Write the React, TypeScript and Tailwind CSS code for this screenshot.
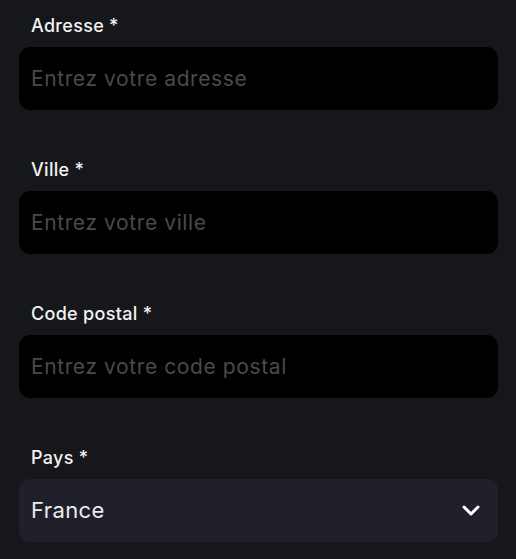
import { useState } from 'react';

const fields = [
    { label: "Adresse", placeholder: "Entrez votre adresse" },
    { label: "Ville", placeholder: "Entrez votre ville" },
    { label: "Code postal", placeholder: "Entrez votre code postal" },
];

const AddressForm = () => {
    const [values, setValues] = useState<Record<string, string>>({});
    const [country, setCountry] = useState("France");

    return (
        <div
            className="min-h-screen w-full bg-[#16171b] pl-[19px] pr-[18px] pt-[12px] font-['Inter',sans-serif]"
        >
            <div className="flex flex-col gap-y-[46px]">
                {fields.map((field) => (
                    <div key={field.label} className="flex flex-col gap-y-[7px]">
                        <label className="pl-[12px] text-[18px] leading-[28px] font-medium text-[#f2f2f2] tracking-[0.3px]">
                            {field.label} *
                        </label>
                        <input
                            type="text"
                            value={values[field.label] ?? ""}
                            onChange={(e) => setValues({ ...values, [field.label]: e.target.value })}
                            placeholder={field.placeholder}
                            className="h-[63px] w-full rounded-[11px] bg-black px-[12px] text-[21px] tracking-[0.6px] text-[#e5e5e5] placeholder:text-[#4a4a4a] outline-none"
                        />
                    </div>
                ))}

                {/* Pays select */}
                <div className="flex flex-col gap-y-[7px]">
                    <label className="pl-[12px] text-[18px] leading-[28px] font-medium text-[#f2f2f2] tracking-[0.3px]">
                        Pays *
                    </label>
                    <div className="relative">
                        <select
                            value={country}
                            onChange={(e) => setCountry(e.target.value)}
                            className="h-[63px] w-full appearance-none rounded-[11px] bg-[#1f2029] px-[12px] text-[22px] tracking-[0.4px] text-[#ececec] outline-none"
                        >
                            <option>France</option>
                            <option>Belgique</option>
                            <option>Suisse</option>
                        </select>
                        <svg
                            className="pointer-events-none absolute right-[18px] top-[26px] w-[18px] h-[11px]"
                            viewBox="0 0 18 11"
                            fill="none"
                        >
                            <path d="M2 2L9 9L16 2" stroke="#ffffff" strokeWidth="3" strokeLinecap="round" strokeLinejoin="round" />
                        </svg>
                    </div>
                </div>
            </div>
        </div>
    );
};

export default function App() {
    return <AddressForm />;
}
